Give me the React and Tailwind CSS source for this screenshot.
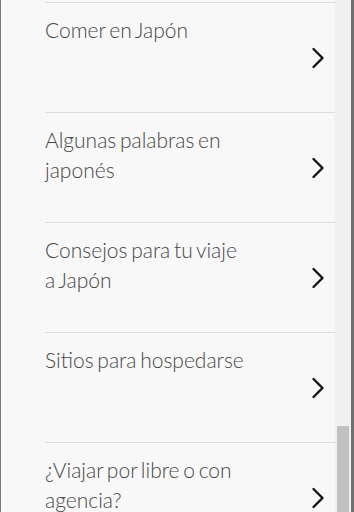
const items = [
  { lines: ['Comer en Japón'] },
  { lines: ['Algunas palabras en', 'japonés'] },
  { lines: ['Consejos para tu viaje', 'a Japón'] },
  { lines: ['Sitios para hospedarse'] },
  { lines: ['¿Viajar por libre o con', 'agencia?'] },
];

function Chevron() {
  return (
    <svg width="14" height="22" viewBox="0 0 14 22" fill="none" className="shrink-0">
      <path d="M2.5 2 L11.5 11 L2.5 20" stroke="#151515" strokeWidth="2.4" strokeLinecap="round" strokeLinejoin="round" />
    </svg>
  );
}

export default function App() {
  return (
    <div className="flex h-[512px] w-[354px] overflow-hidden bg-[#f8f8f8] border-l border-[#7a7a7a]" style={{ fontFamily: 'Lato, "Open Sans", sans-serif' }}>
      {/* list */}
      <div className="flex-1 pt-[2px] pl-[44px]">
        {items.map((item) => (
          <div key={item.lines[0]} className="flex h-[110px] items-center border-t border-[#dedede] pr-[10px]">
            <div className="self-start pt-[12px] text-[21px] leading-[30px] font-light text-[#474747] whitespace-nowrap [word-spacing:-2px]">
              {item.lines.map((l) => (
                <div key={l}>{l}</div>
              ))}
            </div>
            <div className="ml-auto">
              <Chevron />
            </div>
          </div>
        ))}
      </div>

      {/* scrollbar */}
      <div className="flex w-[16px] flex-col bg-[#f0f0f0] px-[2px]">
        <div className="flex-1" />
        <div className="h-[86px] bg-[#c1c1c1]" />
      </div>
      <div className="w-[3px] bg-[#6f6f6f]" />
    </div>
  );
}
